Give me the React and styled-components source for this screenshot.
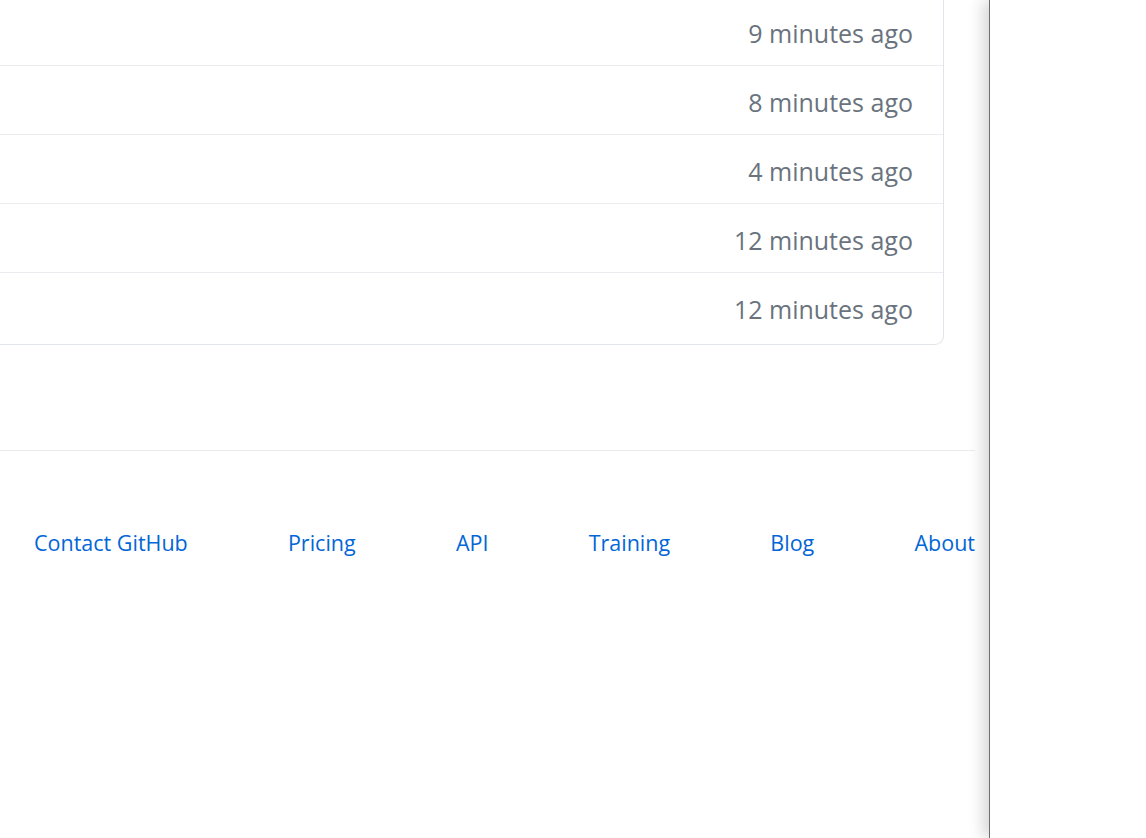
import React from 'react'
import styled, { createGlobalStyle } from 'styled-components'

const Global = createGlobalStyle`
  html, body { margin: 0; padding: 0; background: #fff; }
  body { font-family: "Open Sans", "Noto Sans", "Liberation Sans", sans-serif; }
`

const Screen = styled.div`
  display: flex;
  height: 838px;
  overflow: hidden;
`
const Page = styled.div`
  width: 989px;
  flex-shrink: 0;
  padding-right: 14px;
  box-sizing: border-box;
`
// the list runs off the top and left of the viewport (page is scrolled)
const FileBox = styled.div`
  margin-top: -3px;
  margin-right: 31px;
  padding-bottom: 3px;
  border: 1px solid #e1e4e8;
  border-top: none;
  border-left: none;
  border-radius: 0 0 9px 0;
`
const Row = styled.div`
  height: 64px;
  padding: 4px 30px 0 0;
  display: flex;
  align-items: center;
  justify-content: flex-end;
  border-top: ${p => (p.$first ? 'none' : '1px solid #eaecef')};
`
const Age = styled.span`
  color: #6a737d;
  font-size: 25px;
`
const Footer = styled.footer`
  margin-top: 105px;
  border-top: 1px solid #eaecef;
  padding: 77px 0 0 34px;
  display: flex;
  justify-content: space-between;
`
const FootLink = styled.a`
  color: #0366d6;
  font-size: 21.5px;
  text-decoration: none;
`
const SidePanel = styled.aside`
  flex: 1;
  background: #fff;
  border-left: 1px solid #6e6e6e;
  box-shadow: -6px 0 14px rgba(0, 0, 0, 0.16);
`

const ages = ['9 minutes ago', '8 minutes ago', '4 minutes ago', '12 minutes ago', '12 minutes ago']
const links = ['Contact GitHub', 'Pricing', 'API', 'Training', 'Blog', 'About']

export default function App() {
  return (
    <>
      <Global />
      <Screen>
        <Page>
          <FileBox>
            {ages.map((a, i) => (
              <Row key={i} $first={i === 0}>
                <Age>{a}</Age>
              </Row>
            ))}
          </FileBox>
          <Footer>
            {links.map(l => (
              <FootLink key={l} href="#">{l}</FootLink>
            ))}
          </Footer>
        </Page>
        <SidePanel />
      </Screen>
    </>
  )
}
